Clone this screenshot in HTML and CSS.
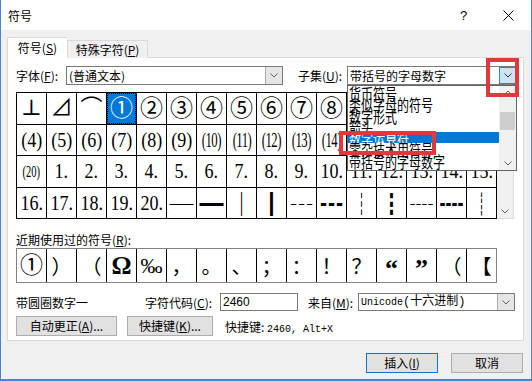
FILE: index.html
```html
<!DOCTYPE html>
<html lang="zh-CN">

<head>
    <meta charset="UTF-8">
    <title>符号</title>
    <link rel="stylesheet" href="styles.css">
</head>

<body>
    <div class="window">
        <div class="titlebar">
            <span class="title">符号</span>
            <span class="tb-btn">?</span>
            <span class="tb-btn">
                <svg width="11" height="11" viewBox="0 0 11 11"><path d="M0.5 0.5 L10.5 10.5 M10.5 0.5 L0.5 10.5" stroke="#000" stroke-width="1" fill="none"/></svg>
            </span>
        </div>

        <div class="content">
            <div class="tabs">
                <div class="tab active">符号(<u>S</u>)</div>
                <div class="tab">特殊字符(<u>P</u>)</div>
            </div>

            <div class="panel">
                <div class="font-row">
                    <span class="lbl lbl-font">字体(<u>F</u>):</span>
                    <div class="combo combo-font">
                        <span class="combo-text">(普通文本)</span>
                        <span class="drop">
                            <svg width="8" height="5" viewBox="0 0 8 5"><path d="M0.5 0.5 L4 4 L7.5 0.5" fill="none" stroke="#606060"/></svg>
                        </span>
                    </div>
                    <span class="lbl lbl-subset">子集(<u>U</u>):</span>
                    <div class="combo combo-subset">
                        <span class="combo-text">带括号的字母数字</span>
                        <span class="drop hot">
                            <svg width="8" height="5" viewBox="0 0 8 5"><path d="M0.5 0.5 L4 4 L7.5 0.5" fill="none" stroke="#333"/></svg>
                        </span>

                        <div class="droplist">
                            <div class="items">
                                <div class="item"><span>货币符号</span></div>
                                <div class="item"><span>类似字母的符号</span></div>
                                <div class="item"><span>数字形式</span></div>
                                <div class="item"><span>箭头</span></div>
                                <div class="item selected"><span>数学运算符</span></div>
                                <div class="item"><span>零杂技术用符号</span></div>
                                <div class="item"><span>带括号的字母数字</span></div>
                            </div>
                            <div class="listscroll">
                                <span class="arrow">
                                    <svg width="8" height="5" viewBox="0 0 8 5"><path d="M0.5 4.5 L4 1 L7.5 4.5" fill="none" stroke="#606060"/></svg>
                                </span>
                                <span class="thumb"></span>
                                <span class="arrow arrow-down">
                                    <svg width="8" height="5" viewBox="0 0 8 5"><path d="M0.5 0.5 L4 4 L7.5 0.5" fill="none" stroke="#606060"/></svg>
                                </span>
                            </div>
                        </div>

                        <div class="mark mark-btn"></div>
                        <div class="mark mark-item"></div>
                    </div>
                </div>

                <div class="symbols">
                    <div class="grid">
                        <div class="cell">⊥</div><div class="cell">⊿</div><div class="cell">⌒</div>
                        <div class="cell circ current">①</div><div class="cell circ">②</div><div class="cell circ">③</div>
                        <div class="cell circ">④</div><div class="cell circ">⑤</div><div class="cell circ">⑥</div>
                        <div class="cell circ">⑦</div><div class="cell circ">⑧</div><div class="cell circ">⑨</div>
                        <div class="cell circ">⑩</div><div class="cell"><span class="n">(1)</span></div>
                        <div class="cell"><span class="n">(2)</span></div><div class="cell"><span class="n">(3)</span></div>

                        <div class="cell"><span class="n">(4)</span></div><div class="cell"><span class="n">(5)</span></div>
                        <div class="cell"><span class="n">(6)</span></div><div class="cell"><span class="n">(7)</span></div>
                        <div class="cell"><span class="n">(8)</span></div><div class="cell"><span class="n">(9)</span></div>
                        <div class="cell"><span class="n2">(10)</span></div><div class="cell"><span class="n2">(11)</span></div>
                        <div class="cell"><span class="n2">(12)</span></div><div class="cell"><span class="n2">(13)</span></div>
                        <div class="cell"><span class="n2">(14)</span></div><div class="cell"><span class="n2">(15)</span></div>
                        <div class="cell"><span class="n2">(16)</span></div><div class="cell"><span class="n2">(17)</span></div>
                        <div class="cell"><span class="n2">(18)</span></div><div class="cell"><span class="n2">(19)</span></div>

                        <div class="cell"><span class="n3">(20)</span></div><div class="cell"><span class="n">1.</span></div>
                        <div class="cell"><span class="n">2.</span></div><div class="cell"><span class="n">3.</span></div>
                        <div class="cell"><span class="n">4.</span></div><div class="cell"><span class="n">5.</span></div>
                        <div class="cell"><span class="n">6.</span></div><div class="cell"><span class="n">7.</span></div>
                        <div class="cell"><span class="n">8.</span></div><div class="cell"><span class="n">9.</span></div>
                        <div class="cell"><span class="n">10.</span></div><div class="cell"><span class="n">11.</span></div>
                        <div class="cell"><span class="n">12.</span></div><div class="cell"><span class="n">13.</span></div>
                        <div class="cell"><span class="n">14.</span></div><div class="cell"><span class="n">15.</span></div>

                        <div class="cell"><span class="n">16.</span></div><div class="cell"><span class="n">17.</span></div>
                        <div class="cell"><span class="n">18.</span></div><div class="cell"><span class="n">19.</span></div>
                        <div class="cell"><span class="n">20.</span></div>
                        <div class="cell box">─</div><div class="cell box">━</div><div class="cell box">│</div>
                        <div class="cell box">┃</div><div class="cell box">┄</div><div class="cell box">┅</div>
                        <div class="cell box">┆</div><div class="cell box">┇</div><div class="cell box">┈</div>
                        <div class="cell box">┉</div><div class="cell box">┊</div>
                    </div>
                    <div class="vscroll">
                        <span class="arrow">
                            <svg width="8" height="5" viewBox="0 0 8 5"><path d="M0.5 0.5 L4 4 L7.5 0.5" fill="none" stroke="#606060"/></svg>
                        </span>
                    </div>
                </div>

                <div class="recent-lbl">近期使用过的符号(<u>R</u>):</div>
                <div class="recent">
                    <div class="cell circ">①</div><div class="cell cjk">）</div><div class="cell cjk">（</div>
                    <div class="cell omega">Ω</div><div class="cell">‰</div><div class="cell cjk">，</div>
                    <div class="cell cjk">。</div><div class="cell cjk">、</div><div class="cell cjk">；</div>
                    <div class="cell cjk">：</div><div class="cell cjk">！</div><div class="cell cjk">？</div>
                    <div class="cell quote">“</div><div class="cell quote">”</div><div class="cell cjk">（</div>
                    <div class="cell cjk">【</div>
                </div>

                <div class="info-row">
                    <span class="sym-name">带圆圈数字一</span>
                    <span class="lbl lbl-code">字符代码(<u>C</u>):</span>
                    <div class="field">2460</div>
                    <span class="lbl lbl-from">来自(<u>M</u>):</span>
                    <div class="combo combo-from">
                        <span class="combo-text mono">Unicode<span class="cjk-s">(十六进制)</span></span>
                        <span class="drop">
                            <svg width="8" height="5" viewBox="0 0 8 5"><path d="M0.5 0.5 L4 4 L7.5 0.5" fill="none" stroke="#606060"/></svg>
                        </span>
                    </div>
                </div>

                <div class="btn-row">
                    <button class="btn btn-auto">自动更正(<u>A</u>)...</button>
                    <button class="btn btn-key">快捷键(<u>K</u>)...</button>
                    <span class="shortcut">快捷键: <span class="mono">2460, Alt+X</span></span>
                </div>
            </div>

            <div class="footer">
                <button class="btn btn-dlg default">插入(<u>I</u>)</button>
                <button class="btn btn-dlg">取消</button>
            </div>
        </div>
    </div>
</body>

</html>
```

FILE: styles.css
```css
* {
    box-sizing: border-box;
}

body {
    margin: 0;
    width: 532px;
    height: 381px;
    overflow: hidden;
    font-family: "Noto Sans CJK SC", sans-serif;
    font-size: 12px;
    color: #000;
    background: #f0f0f0;
}

u {
    text-decoration: underline;
    text-underline-offset: 1px;
}

.window {
    width: 532px;
    height: 381px;
    border: 1px solid #4a86c5;
    border-top: none;
    border-bottom-width: 2px;
    background: #f0f0f0;
    display: flex;
    flex-direction: column;
}

.titlebar {
    height: 30px;
    flex-shrink: 0;
    background: #fff;
    display: flex;
    align-items: center;
    padding-left: 7px;
}

.title {
    flex: 1;
}

.tb-btn {
    width: 45px;
    height: 30px;
    display: flex;
    align-items: center;
    justify-content: center;
    font-family: "Liberation Sans", sans-serif;
    font-size: 13px;
}

.content {
    padding: 7px 7px 0 6px;
}

/* pestañas */
.tabs {
    display: flex;
    align-items: flex-end;
    height: 21px;
    margin-bottom: -1px;
    position: relative;
    z-index: 1;
}

.tab {
    height: 18px;
    width: 81px;
    border: 1px solid #d9d9d9;
    border-bottom: none;
    background: #f0f0f0;
    display: flex;
    align-items: center;
    justify-content: center;
    line-height: 1;
}

.tab.active {
    width: 60px;
    height: 21px;
    background: #fff;
    border-right: none;
    padding-bottom: 1px;
}

.panel {
    height: 284px;
    background: #fff;
    border: 1px solid #d9d9d9;
    padding-left: 8px;
}

.lbl {
    flex-shrink: 0;
    white-space: nowrap;
}

/* fila de fuente */
.font-row {
    display: flex;
    align-items: center;
    margin-top: 8px;
    height: 19px;
}

.lbl-font {
    width: 50px;
}

.lbl-subset {
    width: 49px;
    margin-left: 15px;
}

.combo {
    height: 19px;
    border: 1px solid #7a7a7a;
    background: #fff;
    display: flex;
    align-items: center;
    padding-left: 2px;
    position: relative;
}

.combo-text {
    flex: 1;
    white-space: nowrap;
    line-height: 1;
}

.combo-font {
    width: 217px;
}

.combo-subset {
    width: 170px;
}

.drop {
    width: 17px;
    height: 17px;
    background: #e5e5e5;
    border-left: 1px solid #acacac;
    display: flex;
    align-items: center;
    justify-content: center;
}

.drop.hot {
    background: #cce4f7;
    border: 1px solid #3c7fb1;
}

.droplist {
    position: absolute;
    left: -1px;
    top: 18px;
    width: 170px;
    height: 86px;
    background: #fff;
    border: 1px solid #646464;
    display: flex;
    z-index: 5;
    overflow: hidden;
}

.items {
    flex: 1;
    padding-top: 1px;
}

.item {
    height: 11.3px;
    line-height: 11.3px;
    padding-left: 1px;
    white-space: nowrap;
}

.item span {
    display: inline-block;
    transform: scaleY(1.3);
}

.item.selected {
    background: #0078d7;
    color: #fff;
}

.listscroll {
    width: 17px;
    background: #f0f0f0;
    display: flex;
    flex-direction: column;
}

.arrow {
    height: 13px;
    display: flex;
    align-items: center;
    justify-content: center;
    flex-shrink: 0;
}

.thumb {
    height: 18px;
    margin: 13px 1px 0;
    background: #cdcdcd;
}

.arrow-down {
    margin-top: auto;
}

.mark {
    position: absolute;
    border: 4px solid #e2383a;
    z-index: 6;
}

.mark-btn {
    left: 138px;
    top: -9px;
    width: 33px;
    height: 39px;
}

.mark-item {
    left: -9px;
    top: 64px;
    width: 97px;
    height: 24px;
}

/* tabla de simbolos */
.symbols {
    display: flex;
    margin-top: 7px;
}

.grid,
.recent {
    display: grid;
    grid-template-columns: repeat(16, 29px);
    gap: 1px;
    background: #000;
    border: 1px solid #000;
    width: 481px;
}

.grid {
    grid-auto-rows: 30.5px;
}

.cell {
    background: #fff;
    display: flex;
    align-items: center;
    justify-content: center;
    font-family: "Liberation Serif", "DejaVu Serif", "Noto Sans CJK SC", serif;
    font-size: 22px;
    line-height: 1;
    overflow: hidden;
    white-space: nowrap;
}

.cell.circ {
    font-size: 23px;
}

.cell.current {
    background: #0078d7;
    color: #fff;
    outline: 1px dotted #000;
    outline-offset: -1px;
}

.n,
.n2,
.n3 {
    display: inline-block;
}

.n {
    transform: scaleX(0.82);
}

.n2 {
    transform: scaleX(0.58);
    letter-spacing: -1px;
}

.n3 {
    font-size: 17px;
    transform: scaleX(0.62);
}

.cell.box {
    font-family: "Noto Sans CJK SC", sans-serif;
    font-size: 24px;
}

.vscroll {
    width: 17px;
    background: #f0f0f0;
    border: 1px solid #dcdcdc;
    border-left: none;
    display: flex;
    flex-direction: column;
    justify-content: flex-end;
}

.recent-lbl {
    margin-top: 14px;
    line-height: 14px;
}

.recent {
    margin-top: 1px;
    grid-auto-rows: 33px;
    border-color: #828282;
}

.cell.cjk {
    font-family: "Noto Sans CJK SC", sans-serif;
    font-size: 20px;
}

.cell.omega {
    font-size: 25px;
    font-weight: bold;
}

.cell.quote {
    font-size: 26px;
    font-weight: bold;
    padding-top: 6px;
}

/* fila de codigo */
.info-row {
    display: flex;
    align-items: center;
    margin-top: 10px;
    height: 18px;
}

.sym-name {
    width: 129px;
    flex-shrink: 0;
}

.lbl-code {
    width: 75px;
}

.field {
    width: 78px;
    height: 18px;
    border: 1px solid #7a7a7a;
    padding-left: 2px;
    font-family: "Liberation Sans", sans-serif;
    font-size: 12px;
    line-height: 16px;
}

.lbl-from {
    width: 50px;
    margin-left: 10px;
}

.combo-from {
    width: 157px;
    height: 18px;
}

.combo-from .drop {
    height: 16px;
}

.mono {
    font-family: "Liberation Mono", monospace;
    font-size: 10px;
}

.cjk-s {
    font-family: "Liberation Mono", "Noto Sans CJK SC", monospace;
    font-size: 12px;
}

/* botones */
.btn-row {
    display: flex;
    align-items: center;
    margin-top: 5px;
}

.btn {
    height: 20px;
    padding: 0;
    font-family: "Noto Sans CJK SC", sans-serif;
    font-size: 12px;
    color: #000;
    background: #e1e1e1;
    border: 1px solid #adadad;
    line-height: 1;
}

.btn-auto {
    width: 101px;
}

.btn-key {
    width: 86px;
    margin-left: 10px;
}

.shortcut {
    margin-left: 12px;
}

.footer {
    display: flex;
    justify-content: flex-end;
    gap: 13px;
    margin-top: 12px;
    padding-right: 1px;
}

.btn-dlg {
    width: 72px;
}

.btn-dlg.default {
    border-color: #0078d7;
}
```
